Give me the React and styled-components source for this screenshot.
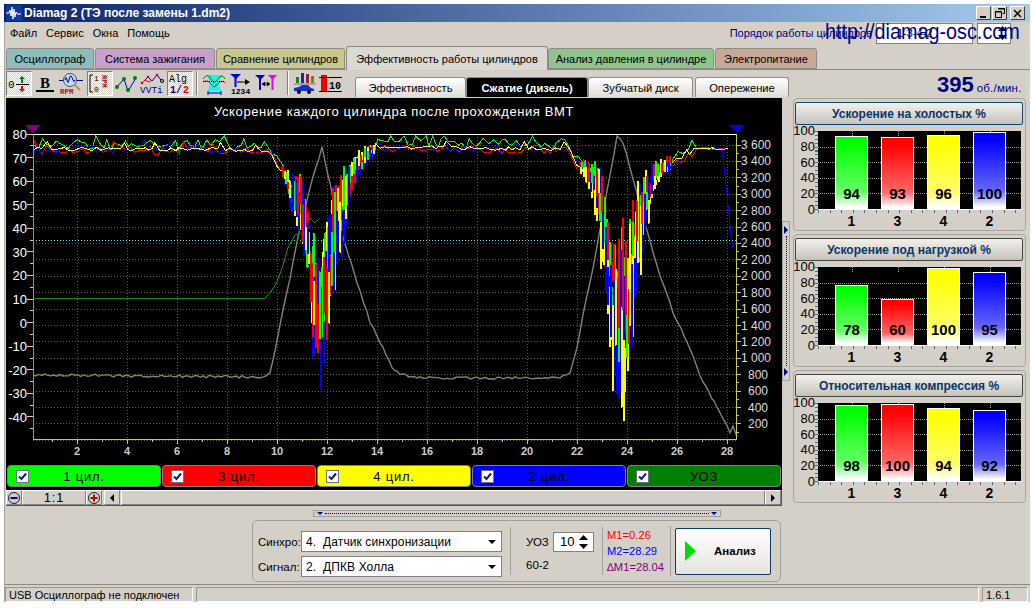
import React from "react"
import styled, { createGlobalStyle } from "styled-components"

const FACE = "#d4d0c8"

const GlobalStyle = createGlobalStyle`
  html, body {
    margin: 0;
    background: #fff;
    font-family: "Liberation Sans", Arial, sans-serif;
    font-size: 12px;
    color: #000;
  }
  * { box-sizing: border-box; }
`

const Page = styled.div`
  width: 1032px;
  height: 608px;
  padding: 4px 2px 0 4px;
  overflow: hidden;
`

const Window = styled.div`
  position: relative;
  width: 1026px;
  height: 598px;
  background: ${FACE};
  border-left: 1px solid #a8a59e;
  display: flex;
  flex-direction: column;
`

const TitleBar = styled.div`
  height: 18px;
  margin-left: -1px;
  background: linear-gradient(90deg, #0a246a, #a6caf0);
  display: flex;
  align-items: center;
  padding: 0 5px 0 2px;
  color: #fff;
  font: bold 12px "Liberation Sans", Arial, sans-serif;
`

const TitleText = styled.span`
  margin-left: 2px;
  flex: 1;
`

const WinButton = styled.span`
  width: 15px;
  height: 14px;
  margin-left: 1px;
  background: ${FACE};
  border: 1px solid;
  border-color: #fff #404040 #404040 #fff;
  display: flex;
  align-items: center;
  justify-content: center;
  &:last-child { margin-left: 3px; }
`

const MenuBar = styled.div`
  height: 22px;
  display: flex;
  align-items: center;
  padding-left: 5px;
`

const MenuItem = styled.span`
  margin-right: 9px;
  font-size: 11px;
`

const OrderLabel = styled.span`
  margin-left: auto;
  color: #000080;
  font-size: 11px;
`

const OrderBox = styled.span`
  width: ${p => p.$w}px;
  height: 21px;
  margin-left: 4px;
  padding-left: 20px;
  background: #fff;
  border: 1px solid #808080;
  display: flex;
  align-items: center;
  font-size: 11px;
  &:last-of-type { margin-right: 19px; }
`

const SiteLink = styled.div`
  position: absolute;
  left: 820px;
  top: 15px;
  font-size: 22px;
  color: #00008b;
  white-space: nowrap;
  transform: scaleX(0.9);
  transform-origin: left center;
`

const TabStrip = styled.div`
  height: 26px;
  display: flex;
  align-items: flex-end;
  padding-left: 1px;
  border-bottom: 1px solid #8a8880;
`

const Tab = styled.div`
  flex: none;
  width: ${p => p.$w}px;
  height: ${p => (p.$active ? 24 : 21)}px;
  margin-right: ${p => (p.$active ? 0 : 1)}px;
  margin-bottom: ${p => (p.$active ? -1 : 0)}px;
  background: ${p => p.$color};
  border: 1px solid #8e8c84;
  border-bottom: ${p => (p.$active ? "none" : "1px solid #8e8c84")};
  border-radius: 3px 3px 0 0;
  display: flex;
  align-items: center;
  justify-content: center;
  white-space: nowrap;
  font-size: 11px;
  z-index: ${p => (p.$active ? 1 : 0)};
`

const ToolRow = styled.div`
  height: 27px;
  display: flex;
  align-items: stretch;
  padding-left: 1px;
`

const ToolGroup = styled.div`
  display: flex;
  margin-right: ${p => p.$gap || 0}px;
  padding-top: 1px;
`

const ToolButton = styled.div`
  width: 26px;
  height: 25px;
  display: flex;
  align-items: center;
  justify-content: center;
  border: 1px solid ${p => (p.$on ? "#fff" : "transparent")};
  border-top-color: ${p => (p.$on ? "#808080" : "transparent")};
  border-left-color: ${p => (p.$on ? "#808080" : "transparent")};
  background: ${p => (p.$on ? "repeating-conic-gradient(#fff 0 25%, #d4d0c8 0 50%) 0 0 / 2px 2px" : "none")};
`

const ToolSep = styled.div`
  width: 2px;
  height: 24px;
  margin: 1px 3px 0 3px;
  border-left: 1px solid #808080;
  border-right: 1px solid #fff;
`

const IconSvg = styled.svg`
  font-family: "Liberation Mono", monospace;
`

const SubTabs = styled.div`
  position: absolute;
  left: 350px;
  top: 73px;
  display: flex;
  align-items: flex-end;
`

const SubTab = styled.div`
  width: ${p => p.$w}px;
  height: 20px;
  margin-right: ${p => p.$mr || 0}px;
  border: 1px solid #8e8c84;
  border-bottom: none;
  border-radius: 3px 3px 0 0;
  display: flex;
  align-items: center;
  justify-content: center;
  font-size: 11.2px;
  font-weight: ${p => (p.$active ? 700 : 400)};
  color: ${p => (p.$active ? "#fff" : "#000")};
  background: ${p => (p.$active ? "#000" : "linear-gradient(#fff, #dedcd6)")};
`

const Rpm = styled.div`
  position: absolute;
  left: 932px;
  top: 68px;
  color: #000080;
  display: flex;
  align-items: baseline;
  font-size: 11.5px;
  letter-spacing: 0.2px;
  b {
    font-size: 22px;
    margin-right: 3px;
    letter-spacing: 0;
  }
`

const Main = styled.div`
  display: flex;
  height: 488px;
`

const LeftColumn = styled.div`
  width: 777px;
  padding-left: 1px;
`

const ChartPanel = styled.div`
  width: 776px;
  height: 392px;
  margin-top: 1px;
  background: #000;
`

const ChartSvg = styled.svg`
  display: block;
  font-family: "Liberation Sans", Arial, sans-serif;
`

const Legend = styled.div`
  display: flex;
  gap: 1px;
  padding: 0 1px;
`

const LegendItem = styled.div`
  position: relative;
  flex: 1;
  height: 22px;
  background: ${p => p.$color};
  border: 1px solid #808080;
  border-radius: 4px;
  display: flex;
  align-items: center;
  justify-content: center;
  font-size: 13px;
  letter-spacing: 0.8px;
`

const CheckMark = styled.span`
  position: absolute;
  left: 8px;
  top: 4px;
  width: 13px;
  height: 13px;
  background: #fff;
  border: 1px solid #6b6f8a;
  display: flex;
  align-items: center;
  justify-content: center;
`

const ScrollRow = styled.div`
  width: 776px;
  height: 16px;
  display: flex;
  border-bottom: 1px solid #555;
  border-right: 1px solid #555;
`

const SmallButton = styled.div`
  width: ${p => p.$w || 16}px;
  height: 15px;
  margin-left: ${p => p.$ml || 0}px;
  border: 1px solid;
  border-color: #fff #808080 #808080 #fff;
  display: flex;
  align-items: center;
  justify-content: center;
  font-size: 13px;
  letter-spacing: 0.8px;
`

const ScrollThumb = styled.div`
  flex: 1;
  height: 15px;
  border: 1px solid;
  border-color: #fff #808080 #808080 #fff;
  margin-left: 1px;
`

const SplitBar = styled.div`
  width: 408px;
  height: 7px;
  margin: 4px 0 3px 307px;
  border: 1px solid #a0a0a0;
  display: flex;
  align-items: center;
  justify-content: space-between;
  padding: 0 3px;
`

const Dots = styled.i`
  flex: 1;
  margin: 0 2px;
  border-top: 1px dotted #000080;
`

const ControlPanel = styled.div`
  width: 529px;
  height: 62px;
  margin-left: 246px;
  border: 1px solid #a0a09a;
  border-radius: 5px;
  display: flex;
  align-items: center;
`

const SelectGroup = styled.div`
  width: 257px;
  padding: 6px 0 0 5px;
  display: flex;
  flex-direction: column;
  gap: 4px;
`

const SelectRow = styled.label`
  display: flex;
  align-items: center;
  font-size: 11.5px;
`

const RowLabel = styled.span`
  width: 43px;
`

const SelectBox = styled.div`
  width: 201px;
  height: 21px;
  background: #fff;
  border: 1px solid #808080;
  display: flex;
  align-items: center;
  justify-content: space-between;
  padding: 0 5px 0 4px;
  font-size: 12px;
  letter-spacing: 0.1px;
`

const Arrow = styled.i`
  width: 0;
  height: 0;
  border: 4px solid transparent;
  border-top: 4px solid #000;
  border-bottom: none;
`

const VSep = styled.div`
  width: 1px;
  height: ${p => p.$h || 48}px;
  background: #a0a0a0;
`

const UozGroup = styled.div`
  width: 91px;
  padding-left: 15px;
  display: flex;
  flex-direction: column;
  gap: 7px;
  font-size: 11.5px;
`

const UozRow = styled.div`
  display: flex;
  align-items: center;
  justify-content: space-between;
  padding-right: 8px;
`

const Spinner = styled.div`
  width: 41px;
  height: 20px;
  background: #fff;
  border: 1px solid #808080;
  display: flex;
  align-items: center;
  justify-content: space-between;
  padding: 0 5px 0 6px;
  font-size: 13px;
`

const Measures = styled.div`
  width: 67px;
  padding-left: 4px;
  display: flex;
  flex-direction: column;
  gap: 2px;
  font-size: 11.2px;
  line-height: 14px;
`

const Measure = styled.span`
  color: ${p => p.$color};
  white-space: nowrap;
`

const AnalyzeButton = styled.div`
  width: 96px;
  height: 47px;
  margin-left: 4px;
  border: 1px solid #0a3a6a;
  border-radius: 2px;
  background: linear-gradient(#fff, #e6e4de);
  display: flex;
  align-items: center;
  padding-left: 9px;
  font-weight: 700;
  font-size: 11.5px;
  span { margin-left: 18px; }
`

const VSplitter = styled.div`
  width: 8px;
  height: 160px;
  margin-top: 124px;
  border: 1px solid #a0a0a0;
  display: flex;
  flex-direction: column;
  align-items: center;
  justify-content: space-between;
  padding: 4px 0;
`

const DotsV = styled.i`
  flex: 1;
  margin: 2px 0;
  border-left: 1px dotted #000080;
`

const RightColumn = styled.div`
  width: 233px;
  margin-left: 3px;
  padding-top: 1px;
  display: flex;
  flex-direction: column;
  gap: 3px;
`

const Group = styled.div`
  height: 133px;
  border: 1px solid #a6a49c;
  border-radius: 4px;
  padding: 3px 2px 0 1px;
`

const GroupHeader = styled.div`
  height: 23px;
  border: 1px solid ${p => (p.$focus ? "#0a4a7a" : "#44443e")};
  border-radius: 2px;
  background: linear-gradient(#f2f1ed, #c6c3bb);
  display: flex;
  align-items: center;
  justify-content: center;
  color: #0a3568;
  font-size: 12px;
  font-weight: 700;
`

const ChartGrid = styled.div`
  display: grid;
  grid-template-columns: 23px 203px;
  margin-top: 6px;
`

const YAxis = styled.div`
  height: 79px;
  display: flex;
  flex-direction: column;
  justify-content: space-between;
  align-items: flex-end;
  padding-right: 3px;
  font-size: 13px;
  background: repeating-linear-gradient(#666 0 1px, transparent 1px 3.9px) right top / 3px 100% no-repeat;
`

const YLabel = styled.span`
  height: 0;
  line-height: 0;
`

const Plot = styled.div`
  position: relative;
  height: 79px;
  background: #000;
  border-bottom: 1px solid #fff;
  padding: 0 15px 0 17px;
  display: grid;
  grid-template-columns: repeat(4, 33px);
  gap: 13px;
`

const GridLine = styled.i`
  position: absolute;
  left: 0;
  right: 0;
  top: ${p => p.$top}%;
  border-top: 1px dotted #9a9a9a;
`

const BarSlot = styled.div`
  position: relative;
  display: flex;
  flex-direction: column;
  justify-content: flex-end;
  &::before {
    content: "";
    position: absolute;
    left: 50%;
    top: 0;
    height: 5px;
    border-left: 1px dotted #9a9a9a;
  }
`

const Bar = styled.div`
  position: relative;
  border: 1px solid #fff;
  border-bottom-width: 2px;
  background: linear-gradient(${p => p.$color}, ${p => p.$color} 8%, ${p => p.$color}99 78%, #ffffff) #fff;
  display: flex;
  align-items: flex-end;
  justify-content: center;
  padding-bottom: 6px;
  font-size: 15px;
  font-weight: 700;
  line-height: 14px;
`

const XTicks = styled.div`
  grid-column: 2;
  height: 3px;
  background: repeating-linear-gradient(90deg, #666 0 1px, transparent 1px 11.6px);
`

const XLabels = styled.div`
  grid-column: 2;
  padding: 0 15px 0 17px;
  display: grid;
  grid-template-columns: repeat(4, 33px);
  gap: 13px;
  text-align: center;
  font-size: 14px;
  font-weight: 700;
  line-height: 16px;
`

const StatusBar = styled.div`
  height: 18px;
  margin-top: -1px;
  display: flex;
  border-top: 1px solid #8a8880;
  padding: 2px 2px 0 0;
  font-size: 11px;
`

const StatusCell = styled.div`
  width: ${p => p.$w}px;
  flex: ${p => (p.$w ? "none" : 1)};
  margin-right: ${p => p.$mr || 0}px;
  padding-left: 3px;
  border: 1px solid;
  border-color: #9a988f #fff #fff #9a988f;
  line-height: 14px;
`

// --- осциллограмма ---

const mulberry = seed => () => {
  seed = (seed + 0x6d2b79f5) | 0
  let t = Math.imul(seed ^ (seed >>> 15), 1 | seed)
  t = (t + Math.imul(t ^ (t >>> 7), 61 | t)) ^ t
  return ((t ^ (t >>> 14)) >>> 0) / 4294967296
}

const interp = (pts, x) => {
  if (x <= pts[0][0]) return pts[0][1]
  for (let i = 1; i < pts.length; i++) {
    if (x <= pts[i][0]) {
      const [x0, y0] = pts[i - 1]
      const [x1, y1] = pts[i]
      return y0 + ((y1 - y0) * (x - x0)) / (x1 - x0)
    }
  }
  return pts[pts.length - 1][1]
}

const TOP = [[33, 142], [270, 143], [277, 158], [290, 172], [300, 172], [310, 218], [320, 248], [330, 198], [338, 165], [350, 162], [363, 145], [380, 140], [570, 142], [577, 158], [593, 158], [602, 168], [610, 242], [617, 242], [622, 212], [628, 258], [631, 198], [640, 175], [657, 158], [673, 155], [693, 145], [728, 146]]
const BOTTOM = [[33, 153], [270, 153], [277, 162], [290, 212], [300, 248], [308, 298], [313, 368], [321, 422], [327, 378], [332, 342], [338, 292], [347, 232], [353, 195], [367, 168], [377, 155], [400, 152], [570, 152], [577, 165], [587, 188], [597, 225], [602, 275], [608, 325], [612, 392], [618, 432], [625, 438], [629, 398], [636, 322], [642, 278], [650, 215], [660, 185], [673, 170], [693, 150], [728, 150]]

// плоские участки идут ломаной, в провалах каждая точка — вертикальный выброс
const makeTrace = (seed, band, depth, color) => {
  const rnd = mulberry(seed)
  const flat = []
  const spikes = []
  let x = 34
  while (x < 728) {
    const top = interp(TOP, x)
    const bot = interp(BOTTOM, x)
    const span = bot - top
    if (span < 16) {
      if (x > 693) {
        flat.push([x, top + 2 + rnd() * 2])
      } else {
        const peak = rnd() < 0.1 ? -6 : 0
        const y = top + band[0] + peak + rnd() * (band[1] - band[0])
        flat.push([x, Math.max(136, y)])
      }
      x += 2.5 + rnd() * 3
    } else {
      const d = x < 500 ? depth[0] : depth[1]
      const len = 0.3 + rnd() * 0.45
      const y1 = top + rnd() * (1 - len) * span * d
      const y2 = y1 + len * span * d
      spikes.push({ x, y1, y2, color, order: rnd() })
      flat.push([x, y1], [x, y2])
      x += 2 + rnd() * 1.6
    }
  }
  return { color, flat, spikes }
}

const toPath = pts => pts.map(p => `${p[0].toFixed(1)},${p[1].toFixed(1)}`).join(" ")

const withNoise = (pts, seed, amp) => {
  const rnd = mulberry(seed)
  const out = []
  for (let i = 0; i < pts.length - 1; i++) {
    const [x0, y0] = pts[i]
    const [x1, y1] = pts[i + 1]
    const n = Math.max(1, Math.round((x1 - x0) / 3))
    for (let k = 0; k < n; k++) {
      const t = k / n
      out.push([x0 + (x1 - x0) * t, y0 + (y1 - y0) * t + (rnd() - 0.5) * amp])
    }
  }
  out.push(pts[pts.length - 1])
  return out
}

const TRACES = [
  makeTrace(11, [-3, 8], [0.72, 0.7], "#00ff00"),
  makeTrace(23, [4, 12], [0.8, 0.72], "#ff0000"),
  makeTrace(37, [3, 11], [1, 0.88], "#0000ff"),
  makeTrace(59, [5, 9], [0.82, 1], "#ffff00"),
]

// выбросы разных цилиндров перемешаны, ни один цвет не лежит целиком сверху
const SPIKES = TRACES.flatMap(t => t.spikes).sort((a, b) => a.order - b.order)

const BLUE_TAIL = [[722, 150], [725, 175], [728, 205], [731, 235], [733, 248]]

const RPM_LINE = withNoise(
  [[33, 375], [263, 377], [270, 372], [275, 352], [280, 325], [290, 278], [300, 228], [310, 188], [322, 147], [333, 198], [343, 238], [357, 282], [370, 322], [383, 348], [392, 368], [400, 374], [420, 378], [560, 378], [570, 373], [577, 348], [583, 315], [593, 268], [607, 192], [617, 137], [623, 142], [630, 168], [640, 205], [650, 242], [660, 275], [673, 312], [687, 342], [703, 382], [720, 412], [730, 433], [733, 425], [737, 437]],
  5,
  2.5,
)

const UOZ_LINE = [[33, 298], [265, 298], [270, 293], [277, 282], [283, 265], [288, 248], [295, 235], [302, 233], [305, 222], [310, 218], [315, 223], [320, 218]]

const range = (from, to, step) => {
  const out = []
  for (let v = from; v <= to; v += step) out.push(v)
  return out
}

const yLeft = v => 134 + (80 - v) * 2.358
const yRight = v => 145 + ((3600 - v) / 200) * 16.41
const xVal = v => 27 + v * 25
const fmt = v => (v >= 1000 ? `${Math.floor(v / 1000)} ${String(v % 1000).padStart(3, "0")}` : `${v}`)

const Oscillogram = () => (
  <ChartSvg width="776" height="367" viewBox="6 98 776 367">
    <text x="394" y="116" fill="#fff" fontSize="13" letterSpacing="0.6" textAnchor="middle">Ускорение каждого цилиндра после прохождения ВМТ</text>

    {range(0, 3600, 200).map(v => (
      <line key={v} x1="33" x2="736" y1={yRight(v)} y2={yRight(v)} stroke="#5c5c14" strokeDasharray="1 2" shapeRendering="crispEdges" />
    ))}
    {range(2, 28, 2).map(v => (
      <line key={v} x1={xVal(v)} x2={xVal(v)} y1="134" y2="439" stroke="#5c5c14" strokeDasharray="1 2" shapeRendering="crispEdges" />
    ))}
    <line x1="33" x2="736" y1="240.5" y2="240.5" stroke="#6ee" strokeDasharray="1 2" shapeRendering="crispEdges" />

    <polyline points={toPath(RPM_LINE)} fill="none" stroke="#808080" strokeWidth="1.4" />
    <polyline points={toPath(UOZ_LINE)} fill="none" stroke="#0a8a0a" shapeRendering="crispEdges" />
    {TRACES.map(t => (
      <polyline key={t.color} points={toPath(t.flat)} fill="none" stroke={t.color} shapeRendering="crispEdges" />
    ))}
    {SPIKES.map(s => (
      <line key={`${s.color}${s.x}`} x1={s.x} x2={s.x} y1={s.y1} y2={s.y2} stroke={s.color} strokeWidth="2" shapeRendering="crispEdges" />
    ))}
    <polyline points={toPath(BLUE_TAIL)} fill="none" stroke="#0000ff" shapeRendering="crispEdges" />

    <line x1="33" x2="737" y1="134.5" y2="134.5" stroke="#fff" shapeRendering="crispEdges" />
    <line x1="33" x2="736" y1="439.5" y2="439.5" stroke="#bbb" shapeRendering="crispEdges" />
    <line x1="33.5" x2="33.5" y1="134" y2="440" stroke="#5cb85c" shapeRendering="crispEdges" />
    <line x1="736.5" x2="736.5" y1="134" y2="440" stroke="#c8c860" shapeRendering="crispEdges" />

    {range(-45, 80, 5).map(v => (
      <line key={v} x1={v % 10 === 0 ? 27 : 30} x2="33" y1={yLeft(v)} y2={yLeft(v)} stroke="#ccc" shapeRendering="crispEdges" />
    ))}
    {range(-40, 80, 10).map(v => (
      <text key={v} x="27" y={yLeft(v) + 5} fill="#fff" fontSize="13" textAnchor="end">{v}</text>
    ))}

    {range(100, 3600, 100).map(v => (
      <line key={v} x1="737" x2={v % 200 === 0 ? 741 : 739} y1={yRight(v)} y2={yRight(v)} stroke="#c8c860" shapeRendering="crispEdges" />
    ))}
    {range(200, 3600, 200).map(v => (
      <text key={v} x={v >= 1000 ? 741 : 748} y={yRight(v) + 4} fill="#ddd" fontSize="12">{fmt(v)}</text>
    ))}

    {range(1, 28, 1).map(v => (
      <line key={v} x1={xVal(v)} x2={xVal(v)} y1="440" y2={v % 2 === 0 ? 444 : 442} stroke="#bbb" shapeRendering="crispEdges" />
    ))}
    {range(2, 28, 2).map(v => (
      <text key={v} x={xVal(v)} y="455" fill="#ccc" fontSize="11" fontWeight="700" textAnchor="middle">{v}</text>
    ))}

    <polygon points="25,125 41,125 33,133" fill="#800080" />
    <polygon points="729,125 745,125 737,133" fill="#0000e0" />
  </ChartSvg>
)

// --- значки панели инструментов ---

const I = ({ children }) => (
  <IconSvg width="24" height="23" viewBox="0 0 24 23">{children}</IconSvg>
)

const Tools = {
  zero: (
    <I>
      <text x="1" y="16" fontSize="11">0</text>
      <line x1="9" x2="22" y1="12.5" y2="12.5" stroke="#000" />
      <path d="M15 4l-3 3h2v4h2V7h2z" fill="#008000" />
      <path d="M15 20l-3-3h2v-3h2v3h2z" fill="#f00000" />
    </I>
  ),
  bold: (
    <I>
      <text x="12" y="16" fontSize="15" fontWeight="700" textAnchor="middle" fontFamily="Liberation Serif, serif">B</text>
      <rect x="3" y="18" width="18" height="2" fill="#000" />
    </I>
  ),
  rpm: (
    <I>
      <line x1="0" x2="24" y1="8.5" y2="8.5" stroke="#000080" />
      <circle cx="11" cy="8" r="6.5" fill="#c8d8f0" stroke="#305080" />
      <path d="M6 8q1-5 2 0t2 0 2-4 2 4 2 0" fill="none" stroke="#000080" />
      <line x1="16" x2="21" y1="13" y2="18" stroke="#c89030" strokeWidth="2" />
      <text x="1" y="22" fontSize="7.5" fontWeight="700" fill="#b01010">RPM</text>
    </I>
  ),
  scale: (
    <I>
      <path d="M5 3H2v17h3" fill="none" stroke="#000" />
      <text x="6" y="9" fontSize="8">1</text>
      <text x="6" y="20" fontSize="8">0</text>
      <text x="0" y="0" fontSize="7" fontWeight="700" fill="#a01010" transform="translate(14 3) rotate(90)">RPM</text>
    </I>
  ),
  zigzag: (
    <I>
      <path d="M2 16l8-9 4 12 8-13" fill="none" stroke="#0000c0" />
      <circle cx="3" cy="15" r="2" fill="#008000" />
      <circle cx="10" cy="7" r="2" fill="#008000" />
      <circle cx="14" cy="18" r="2" fill="#008000" />
      <circle cx="21" cy="6" r="2" fill="#008000" />
    </I>
  ),
  vvti: (
    <I>
      <path d="M2 11l6-6 4 4 5-6 4 5" fill="none" stroke="#0000c0" />
      <path d="M2 11l3-3 4 2 3-2" fill="none" stroke="#e00000" />
      <circle cx="2" cy="11" r="1.3" fill="#e00000" />
      <circle cx="8" cy="5" r="1.3" fill="#e00000" />
      <circle cx="17" cy="3" r="1.3" fill="#e00000" />
      <circle cx="22" cy="9" r="1.5" fill="none" stroke="#000" />
      <text x="0" y="21" fontSize="9.5" fill="#000090">VVTi</text>
    </I>
  ),
  alg: (
    <I>
      <text x="1" y="10" fontSize="10">Alg</text>
      <text x="2" y="21" fontSize="10" fontWeight="700" fill="#000090">1/</text>
      <text x="15" y="21" fontSize="10" fontWeight="700" fill="#e00000">2</text>
    </I>
  ),
  cyan: (
    <I>
      <path d="M5 3h15l-3 8 2 8H6l2-8z" fill="#20f0f0" />
      <path d="M1 7q5-7 8 0l3 4 4-4q4-6 7 0" fill="none" stroke="#008000" />
      <path d="M1 10q4-3 8 2l3 3 4-3q4-5 7-1" fill="none" stroke="#f00000" />
      <line x1="1" x2="23" y1="9.5" y2="9.5" stroke="#000" strokeDasharray="1 1" />
      <path d="M6 21h13M6 19v4M19 19v4" fill="none" stroke="#0000a0" />
    </I>
  ),
  flag: (
    <I>
      <path d="M2 2h11l-5 5z" fill="#0000e0" />
      <line x1="7.5" x2="7.5" y1="5" y2="15" stroke="#0000e0" strokeWidth="2" />
      <path d="M9 10h9" stroke="#000" />
      <path d="M22 10l-5-3v6z" fill="#000" />
      <text x="3" y="22" fontSize="8" fontWeight="700">1234</text>
    </I>
  ),
  flags: (
    <I>
      <path d="M1 3h10L6.5 8z" fill="#0000e0" />
      <line x1="6" x2="6" y1="6" y2="18" stroke="#0000e0" strokeWidth="2" />
      <path d="M14 3h9l-4.500 5z" fill="#f000f0" />
      <line x1="18.500" x2="18.500" y1="6" y2="18" stroke="#f000f0" strokeWidth="2" />
      <path d="M9 12h6M8 12l3-2v4zM16 12l-3-2v4z" fill="#000" stroke="#000" strokeWidth="0.6" />
    </I>
  ),
  car: (
    <I>
      <rect x="3" y="5" width="3" height="6" fill="#208020" />
      <rect x="8" y="1" width="3" height="10" fill="#2020c0" />
      <rect x="13" y="2" width="3" height="9" fill="#a02020" />
      <rect x="18" y="4" width="3" height="7" fill="#808000" />
      <line x1="1" x2="23" y1="12" y2="12" stroke="#777" />
      <path d="M1 19v-3l5-1 3-2h6l3 3 3 1v2z" fill="#1030d0" />
      <circle cx="6" cy="20" r="2" fill="#000" />
      <circle cx="16" cy="20" r="2" fill="#000" />
    </I>
  ),
  ten: (
    <I>
      <rect x="2" y="3" width="6" height="16" fill="#f00000" />
      <line x1="0" x2="23" y1="5.500" y2="5.500" stroke="#000" />
      <line x1="0" x2="23" y1="19.500" y2="19.500" stroke="#000" />
      <text x="10" y="17" fontSize="10" fontWeight="700">10</text>
    </I>
  ),
}

const CheckIcon = () => (
  <svg width="9" height="9" viewBox="0 0 9 9">
    <path d="M1 4.500l2.500 2.500L8 1.500" fill="none" stroke="#10206a" strokeWidth="2" />
  </svg>
)

const ZoomIcon = ({ plus }) => (
  <svg width="14" height="14" viewBox="0 0 14 14">
    <circle cx="7" cy="7" r="5.500" fill={plus ? "#d8d0c8" : "#c8cce0"} stroke="#222" />
    <rect x="3.500" y="6" width="7" height="2" fill={plus ? "#a01010" : "#000080"} />
    {plus && <rect x="6" y="3.500" width="2" height="7" fill="#a01010" />}
  </svg>
)

const Tri = ({ dir, color = "#000", size = 4 }) => {
  const s = size
  const d = {
    left: `M${s} 0V${2 * s}L0 ${s}z`,
    right: `M0 0V${2 * s}L${s} ${s}z`,
    up: `M0 ${s}H${2 * s}L${s} 0z`,
    down: `M0 0H${2 * s}L${s} ${s}z`,
  }[dir]
  const vertical = dir === "up" || dir === "down"
  return (
    <svg width={vertical ? 2 * s : s} height={vertical ? s : 2 * s}>
      <path d={d} fill={color} />
    </svg>
  )
}

const SpinArrows = () => (
  <svg width="9" height="14" viewBox="0 0 9 14">
    <path d="M0 5h9L4.500 0zM0 9h9l-4.500 5z" fill="#000" />
  </svg>
)

// --- данные ---

const TABS = [
  { label: "Осциллограф", w: 88, color: "#8fbcbc" },
  { label: "Система зажигания", w: 120, color: "#c8a0c8" },
  { label: "Сравнение цилиндров", w: 129, color: "#c8c88e" },
  { label: "Эффективность работы цилиндров", w: 202, color: "#dcd9d2", active: true },
  { label: "Анализ давления в цилиндре", w: 166, color: "#8fc48c" },
  { label: "Электропитание", w: 102, color: "#c8a898" },
]

const LEGEND = [
  { label: "1 цил.", color: "#00ff00" },
  { label: "3 цил.", color: "#ff0000" },
  { label: "4 цил.", color: "#ffff00" },
  { label: "2 цил.", color: "#0000ff" },
  { label: "УОЗ", color: "#008000" },
]

const BAR_COLORS = ["#00ff00", "#ff0000", "#ffff00", "#0000ff"]
const BAR_NAMES = [1, 3, 4, 2]

const GROUPS = [
  { title: "Ускорение на холостых %", values: [94, 93, 96, 100], focus: true },
  { title: "Ускорение под нагрузкой %", values: [78, 60, 100, 95] },
  { title: "Относительная компрессия %", values: [98, 100, 94, 92] },
]

const BarChart = ({ values }) => (
  <ChartGrid>
    <YAxis>
      {[100, 80, 60, 40, 20, 0].map(v => <YLabel key={v}>{v}</YLabel>)}
    </YAxis>
    <Plot>
      {[20, 40, 60, 80].map(t => <GridLine key={t} $top={t} />)}
      {values.map((v, i) => (
        <BarSlot key={i}>
          <Bar $color={BAR_COLORS[i]} style={{ height: `${v * 0.99}%` }}>{v}</Bar>
        </BarSlot>
      ))}
    </Plot>
    <XTicks />
    <XLabels>
      {BAR_NAMES.map(n => <span key={n}>{n}</span>)}
    </XLabels>
  </ChartGrid>
)

export default function App() {
  return (
    <Page>
      <GlobalStyle />
      <Window>
        <TitleBar>
          <svg width="16" height="16" viewBox="0 0 16 16">
            <rect width="16" height="16" fill="#1038a0" />
            <path d="M0 8h3l1-3 1 6 1-9 1 12 1-10 1 8 1-5 1 2h4" fill="none" stroke="#fff" />
          </svg>
          <TitleText>Diamag 2 (ТЭ после замены 1.dm2)</TitleText>
          <WinButton>
            <svg width="9" height="9"><rect x="1" y="7" width="6" height="2" fill="#000" /></svg>
          </WinButton>
          <WinButton>
            <svg width="10" height="10"><path d="M3.500.5h6v5h-2M.5 3.500h6v6h-6z" fill="none" stroke="#000" /><path d="M3 1h7M0 4h7" stroke="#000" /></svg>
          </WinButton>
          <WinButton>
            <svg width="9" height="9"><path d="M1 1l7 7M8 1L1 8" stroke="#000" strokeWidth="1.500" /></svg>
          </WinButton>
        </TitleBar>

        <MenuBar>
          <MenuItem>Файл</MenuItem>
          <MenuItem>Сервис</MenuItem>
          <MenuItem>Окна</MenuItem>
          <MenuItem>Помощь</MenuItem>
          <OrderLabel>Порядок работы цилиндров</OrderLabel>
          <OrderBox $w={97}>1-3-4-2</OrderBox>
          <OrderBox $w={34}><SpinArrows /></OrderBox>
        </MenuBar>
        <SiteLink>http://diamag-osc.com</SiteLink>

        <TabStrip>
          {TABS.map(t => (
            <Tab key={t.label} $w={t.w} $color={t.color} $active={t.active}>{t.label}</Tab>
          ))}
        </TabStrip>

        <ToolRow>
          <ToolGroup $gap={3}>
            <ToolButton $on>{Tools.zero}</ToolButton>
            <ToolButton>{Tools.bold}</ToolButton>
            <ToolButton>{Tools.rpm}</ToolButton>
          </ToolGroup>
          <ToolGroup $gap={2}>
            <ToolButton $on>{Tools.scale}</ToolButton>
            <ToolButton>{Tools.zigzag}</ToolButton>
            <ToolButton>{Tools.vvti}</ToolButton>
          </ToolGroup>
          <ToolGroup>
            <ToolButton $on>{Tools.alg}</ToolButton>
          </ToolGroup>
          <ToolSep />
          <ToolGroup $gap={5}>
            <ToolButton>{Tools.cyan}</ToolButton>
            <ToolButton>{Tools.flag}</ToolButton>
            <ToolButton>{Tools.flags}</ToolButton>
          </ToolGroup>
          <ToolSep />
          <ToolGroup>
            <ToolButton>{Tools.car}</ToolButton>
            <ToolButton>{Tools.ten}</ToolButton>
          </ToolGroup>
        </ToolRow>

        <SubTabs>
          <SubTab $w={111}>Эффективность</SubTab>
          <SubTab $w={122} $active>Сжатие (дизель)</SubTab>
          <SubTab $w={105} $mr={2}>Зубчатый диск</SubTab>
          <SubTab $w={94}>Опережение</SubTab>
        </SubTabs>

        <Rpm><b>395</b>об./мин.</Rpm>

        <Main>
          <LeftColumn>
            <ChartPanel>
              <Oscillogram />
              <Legend>
                {LEGEND.map(l => (
                  <LegendItem key={l.label} $color={l.color}>
                    <CheckMark><CheckIcon /></CheckMark>
                    {l.label}
                  </LegendItem>
                ))}
              </Legend>
            </ChartPanel>
            <ScrollRow>
              <SmallButton><ZoomIcon /></SmallButton>
              <SmallButton $w={64}>1:1</SmallButton>
              <SmallButton><ZoomIcon plus /></SmallButton>
              <SmallButton $ml={2}><Tri dir="left" /></SmallButton>
              <ScrollThumb />
              <SmallButton><Tri dir="right" /></SmallButton>
            </ScrollRow>
            <SplitBar>
              <Tri dir="down" color="#000080" size={3} />
              <Dots />
              <Tri dir="down" color="#000080" size={3} />
            </SplitBar>
            <ControlPanel>
              <SelectGroup>
                <SelectRow>
                  <RowLabel>Синхро:</RowLabel>
                  <SelectBox>4.&nbsp; Датчик синхронизации<Arrow /></SelectBox>
                </SelectRow>
                <SelectRow>
                  <RowLabel>Сигнал:</RowLabel>
                  <SelectBox>2.&nbsp; ДПКВ Холла<Arrow /></SelectBox>
                </SelectRow>
              </SelectGroup>
              <VSep />
              <UozGroup>
                <UozRow>
                  УОЗ
                  <Spinner>
                    10
                    <SpinArrows />
                  </Spinner>
                </UozRow>
                <span>60-2</span>
              </UozGroup>
              <VSep />
              <Measures>
                <Measure $color="#ff0000">М1=0.26</Measure>
                <Measure $color="#0000ff">М2=28.29</Measure>
                <Measure $color="#800080">∆М1=28.04</Measure>
              </Measures>
              <VSep $h={50} />
              <AnalyzeButton>
                <svg width="11" height="20" viewBox="0 0 11 20"><path d="M0 0l11 10L0 20z" fill="#00e000" /></svg>
                <span>Анализ</span>
              </AnalyzeButton>
            </ControlPanel>
          </LeftColumn>

          <VSplitter>
            <Tri dir="right" color="#000080" />
            <DotsV />
            <Tri dir="right" color="#000080" />
          </VSplitter>

          <RightColumn>
            {GROUPS.map(g => (
              <Group key={g.title}>
                <GroupHeader $focus={g.focus}>{g.title}</GroupHeader>
                <BarChart values={g.values} />
              </Group>
            ))}
          </RightColumn>
        </Main>

        <StatusBar>
          <StatusCell $w={188} $mr={3}>USB Осциллограф не подключен</StatusCell>
          <StatusCell $mr={3} />
          <StatusCell $w={46}>1.6.1</StatusCell>
        </StatusBar>
      </Window>
    </Page>
  )
}
